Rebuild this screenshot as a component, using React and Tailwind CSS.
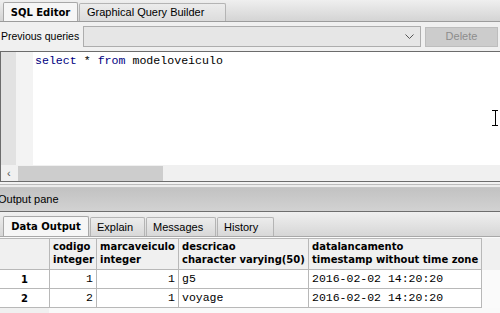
import { useState } from "react"

const ui = "font-['Liberation_Sans',Arial,sans-serif]"
const bold = "font-['DejaVu_Sans',Verdana,sans-serif] font-bold"
const mono = "font-['Liberation_Mono','Courier_New',monospace]"

const columns = [
	{ name: "codigo", type: "integer", w: "w-[47px]", align: "text-right" },
	{ name: "marcaveiculo", type: "integer", w: "w-[82px]", align: "text-right" },
	{ name: "descricao", type: "character varying(50)", w: "w-[130px]", align: "text-left" },
	{ name: "datalancamento", type: "timestamp without time zone", w: "w-[173px]", align: "text-left" },
]

const rows = [
	["1", "1", "g5", "2016-02-02 14:20:20"],
	["2", "1", "voyage", "2016-02-02 14:20:20"],
]

const outputTabs = [
	{ label: "Data Output", w: "w-[86px]" },
	{ label: "Explain", w: "w-[55px]" },
	{ label: "Messages", w: "w-[70px]" },
	{ label: "History", w: "w-[57px]" },
]

const App = () => {
	const [activeTab] = useState("Data Output")

	return (
		<div className={`w-[500px] h-[313px] overflow-hidden bg-[#f0f0f0] text-black ${ui}`}>
			{/* top tabs */}
			<div className="h-[22px] flex items-end pl-[3px] gap-[1px] bg-gradient-to-b from-[#efefef] to-[#d4d4d4] border-b border-[#9c9c9c]">
				<div className={`w-[75px] h-[19px] flex items-center justify-center bg-[#f6f6f6] border border-b-0 border-[#a8a8a8] rounded-t-[2px] text-[10px] ${bold}`}>
					SQL Editor
				</div>
				<div className="w-[147px] h-[18px] flex items-center pl-[7px] bg-gradient-to-b from-[#ececec] to-[#dcdcdc] border border-b-0 border-[#b4b4b4] rounded-t-[2px] text-[11px]">
					Graphical Query Builder
				</div>
			</div>

			{/* previous queries */}
			<div className="h-[29px] flex items-center">
				<span className="w-[83px] pl-[1px] text-[10.5px]">Previous queries</span>
				<div className="w-[338px] h-[21px] flex items-center justify-end pr-[6px] bg-[#e6e6e6] border border-[#adadad]">
					<svg width="9" height="6" viewBox="0 0 9 6">
						<path d="M0.5 0.5 L4.5 4.5 L8.5 0.5" fill="none" stroke="#555" strokeWidth="1" />
					</svg>
				</div>
				<div className="ml-[4px] w-[73px] h-[20px] flex items-center justify-center bg-[#cccccc] border border-[#bdbdbd] text-[11px] text-[#8c8c8c]">
					Delete
				</div>
			</div>

			{/* editor */}
			<div className="h-[131px] flex flex-col bg-white border-t border-b border-l border-[#6c6c6c] relative">
				<div className="flex-1 flex">
					<div className="w-[15px] bg-[#e2e2e2]" />
					<div className="w-[17px] bg-[#f3f3f3]" />
					<div className={`pl-[2px] pt-[2px] text-[11.6px] leading-[14px] ${mono}`}>
						<span className="text-[#00007f]">select</span> * <span className="text-[#00007f]">from</span> modeloveiculo
					</div>
				</div>
				<div className="h-[16px] flex items-center bg-[#f0f0f0]">
					<span className="w-[17px] pl-[6px] text-[#555] text-[11px] leading-none">‹</span>
					<div className="w-[145px] h-[15px] bg-[#cdcdcd]" />
				</div>
				<svg className="absolute left-[491px] top-[58px]" width="7" height="16" viewBox="0 0 7 16">
					<path d="M0 0.5 H6 M3.5 0.5 V15.5 M0 15.5 H6" stroke="#000" strokeWidth="1" fill="none" />
				</svg>
			</div>

			{/* splitter */}
			<div className="h-[6px] flex flex-col">
				<div className="h-[2px] bg-[#f2f2f2]" />
				<div className="h-[1px] bg-[#bcbcbc]" />
				<div className="h-[2px] bg-[#ececec]" />
				<div className="h-[1px] bg-[#c6c6c6]" />
			</div>

			{/* output pane header */}
			<div className="h-[24px] flex items-center -ml-[2px] bg-gradient-to-b from-[#c2c2c2] to-[#d2d2d2] border-b border-[#6e6e6e] text-[11px]">
				Output pane
			</div>

			{/* output tabs */}
			<div className="h-[25px] flex items-end pl-[3px] gap-[1px] bg-gradient-to-b from-[#f0f0f0] to-[#d6d6d6] border-b border-[#a8a8a8]">
				{outputTabs.map((t) =>
					t.label === activeTab ? (
						<div key={t.label} className={`${t.w} h-[20px] flex items-center justify-center bg-[#f6f6f6] border border-b-0 border-[#a8a8a8] rounded-t-[2px] text-[10px] ${bold}`}>
							{t.label}
						</div>
					) : (
						<div key={t.label} className={`${t.w} h-[19px] flex items-center pl-[6px] bg-gradient-to-b from-[#ececec] to-[#d8d8d8] border border-b-0 border-[#b4b4b4] rounded-t-[2px] text-[11px]`}>
							{t.label}
						</div>
					)
				)}
			</div>

			{/* data grid */}
			<div className="flex flex-col pt-[1px] bg-[#fafafa] h-[80px]">
				<div className="flex h-[32px]">
					<div className="w-[49px] bg-[#f0f0f0] border-t border-b border-[#b8b8b8]" />
					{columns.map((c) => (
						<div key={c.name} className={`${c.w} bg-[#f0f0f0] border-t border-b border-l border-[#b8b8b8] px-[3px] pt-[1px] text-[10px] leading-[13px] ${bold}`}>
							<div>{c.name}</div>
							<div className="whitespace-nowrap">{c.type}</div>
						</div>
					))}
					<div className="flex-1 border-l border-[#b8b8b8] bg-[#f0f0f0]" />
				</div>
				{rows.map((r, i) => (
					<div key={i} className="flex h-[19px]">
						<div className={`w-[49px] flex items-center justify-center bg-white border-b border-[#b8b8b8] text-[10px] ${bold}`}>
							{i + 1}
						</div>
						{columns.map((c, j) => (
							<div key={c.name} className={`${c.w} ${c.align} bg-white border-b border-l border-[#b8b8b8] px-[3px] text-[11.5px] leading-[18px] ${mono}`}>
								{r[j]}
							</div>
						))}
						<div className="border-l border-[#b8b8b8]" />
					</div>
				))}
				<div className="flex flex-1">
					<div className="w-[49px] bg-[#f0f0f0]" />
					<div className="flex-1 bg-[#f9f9f9]" />
				</div>
			</div>
		</div>
	)
}

export default App
